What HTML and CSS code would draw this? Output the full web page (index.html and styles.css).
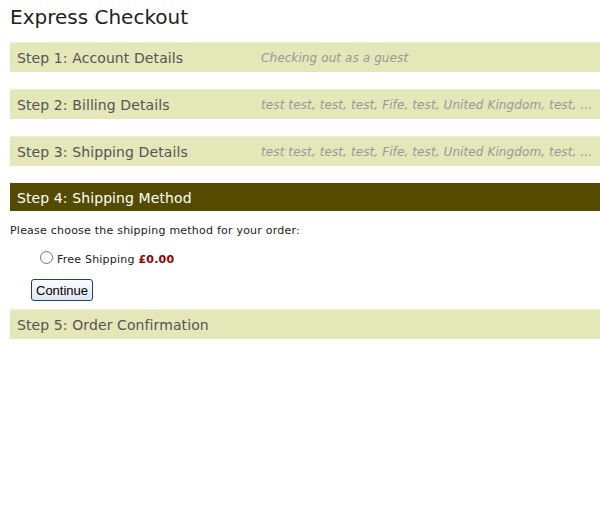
FILE: index.html
```html
<!DOCTYPE html>
<html lang="en">
<head>
    <meta charset="UTF-8">
    <title>Express Checkout</title>
    <link rel="stylesheet" href="styles.css">
</head>
<body>
    <div class="checkout">
        <h1>Express Checkout</h1>

        <div class="step">
            <span class="step-title">Step 1: Account Details</span>
            <span class="step-summary">Checking out as a guest</span>
        </div>

        <div class="step">
            <span class="step-title">Step 2: Billing Details</span>
            <span class="step-summary">test test, test, test, Fife, test, United Kingdom, test, ...</span>
        </div>

        <div class="step">
            <span class="step-title">Step 3: Shipping Details</span>
            <span class="step-summary">test test, test, test, Fife, test, United Kingdom, test, ...</span>
        </div>

        <div class="step active">
            <span class="step-title">Step 4: Shipping Method</span>
        </div>
        <div class="step-body">
            <p>Please choose the shipping method for your order:</p>
            <label class="ship-option">
                <input type="radio" name="shipping" value="free">
                <span class="ship-label">Free Shipping <strong class="price">£0.00</strong></span>
            </label>
            <button type="button" class="continue">Continue</button>
        </div>

        <div class="step">
            <span class="step-title">Step 5: Order Confirmation</span>
        </div>
    </div>
</body>
</html>
```

FILE: styles.css
```css
body {
    margin: 0;
    padding: 0 0 0 10px;
    font-family: "DejaVu Sans", Verdana, sans-serif;
    color: #222;
    background: #fff;
}
h1 {
    font-size: 20px;
    font-weight: normal;
    margin: 0;
    padding: 5px 0 0;
    height: 37px;
    color: #222;
}
.step {
    display: flex;
    align-items: center;
    height: 29px;
    background-color: #e4e7b7;
    border-top: 1px solid #eef0d2;
    margin-bottom: 17px;
    padding-left: 7px;
    white-space: nowrap;
    overflow: hidden;
}
.step-title {
    font-size: 14px;
    color: #555;
    width: 244px;
    flex-shrink: 0;
    letter-spacing: 0.1px;
}
.step-summary {
    font-size: 12px;
    font-style: italic;
    color: #999;
    letter-spacing: 0.1px;
}
.step.active {
    background-color: #554b00;
    border-top-color: #554b00;
    height: 27px;
    margin-bottom: 0;
}
.step.active .step-title {
    color: #fff;
}
.step-body {
    font-size: 11px;
    letter-spacing: 0.22px;
    padding-bottom: 8px;
}
.step-body p {
    margin: 13px 0 14px;
}
.ship-option {
    display: flex;
    align-items: flex-start;
    margin-left: 30px;
    height: 16px;
}
.ship-option input {
    margin: 0 4px 0 0;
    width: 13px;
    height: 13px;
}
.ship-label {
    padding-top: 2px;
}
.price {
    color: #990000;
}
.continue {
    display: block;
    margin: 12px 0 0 21px;
    height: 22px;
    padding: 0 4px;
    font-family: "Liberation Sans", Arial, sans-serif;
    font-size: 13px;
    letter-spacing: 0;
    border: 1px solid #1c3f7a;
    border-radius: 3px;
    background: linear-gradient(#fdfdfe, #dce5f3);
    color: #000;
}
```
